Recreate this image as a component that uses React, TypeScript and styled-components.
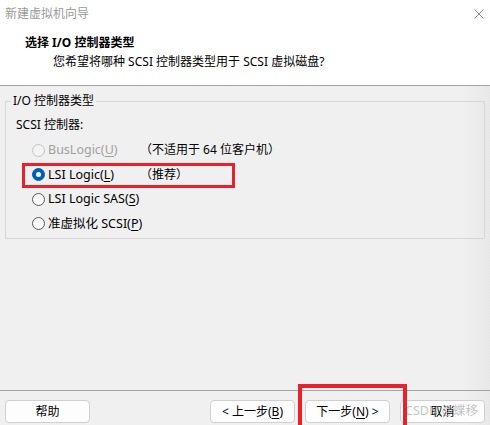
import React from "react";
import styled, { createGlobalStyle } from "styled-components";

const GlobalStyle = createGlobalStyle`
  html, body { margin: 0; padding: 0; }
  body {
    font-family: "Noto Sans", "Noto Sans CJK SC", sans-serif;
    font-size: 12px;
    color: #000;
    background: #f0f0f0;
  }
`;

const Window = styled.div`
  position: relative;
  width: 490px;
  height: 425px;
  display: flex;
  flex-direction: column;
  background: linear-gradient(to right, #f0f0f0 94%, #e8e8e8 100%);
  overflow: hidden;
`;

const Header = styled.header`
  box-sizing: border-box;
  height: 86px;
  background: #fff;
  border-bottom: 1px solid #a3a3a3;
  padding-top: 6px;
  display: flex;
  flex-direction: column;
`;

const TitleBar = styled.div`
  display: flex;
  align-items: center;
  justify-content: space-between;
  height: 16px;
  padding: 0 6px 0 5px;
`;

const Title = styled.span`
  color: #999;
  font-size: 12px;
  line-height: 16px;
`;

const Heading = styled.div`
  margin: 13px 0 0 25px;
  font-weight: bold;
  line-height: 16px;
`;

const SubHeading = styled.div`
  margin: 3px 0 0 53px;
  line-height: 16px;
`;

const Body = styled.main`
  flex: 1;
  padding: 7px 5px 0 5px;
`;

const GroupBox = styled.fieldset`
  margin: 0;
  padding: 0 0 2px 5px;
  border: 1px solid #d6d6d6;
  min-width: 0;
`;

const Legend = styled.legend`
  padding: 0 2px;
  line-height: 16px;
`;

const FieldLabel = styled.div`
  margin-top: 4px;
  padding-left: 5px;
  height: 24px;
  line-height: 24px;
`;

const RadioList = styled.div`
  margin-top: 1px;
  padding-left: 21px;
  display: flex;
  flex-direction: column;
`;

const RadioRow = styled.label`
  display: grid;
  grid-template-columns: 108px auto;
  align-items: center;
  height: 24.5px;
`;

const RadioOption = styled.span<{ $disabled?: boolean }>`
  display: flex;
  align-items: center;
  gap: 3px;
  color: ${(p) => (p.$disabled ? "#a0a0a0" : "#000")};
  line-height: 16px;
`;

const OptionText = styled.span`
  white-space: nowrap;
  font-size: 12.5px;
`;

const RadioCircle = styled.span<{ $checked?: boolean; $disabled?: boolean }>`
  box-sizing: border-box;
  width: 13px;
  height: 13px;
  border-radius: 50%;
  flex: none;
  border: 1px solid
    ${(p) => (p.$checked ? "#005fb8" : p.$disabled ? "#c4c4c4" : "#5a5a5a")};
  background: ${(p) =>
    p.$checked ? "#005fb8" : p.$disabled ? "#f3f3f3" : "#fafafa"};
  display: flex;
  align-items: center;
  justify-content: center;
  &::after {
    content: "";
    display: ${(p) => (p.$checked ? "block" : "none")};
    width: 5px;
    height: 5px;
    border-radius: 50%;
    background: #fff;
  }
`;

const Note = styled.span`
  line-height: 16px;
  white-space: nowrap;
`;

const Key = styled.span`
  text-decoration: underline;
  text-underline-offset: 2px;
`;

const Footer = styled.footer`
  border-top: 1px solid #a3a3a3;
  padding: 9px 5px 2px 5px;
  display: flex;
  gap: 10px;
`;

const Spacer = styled.div`
  flex: 1;
`;

const Button = styled.button`
  box-sizing: border-box;
  width: 85px;
  height: 23px;
  border: 1px solid #d0d0d0;
  border-radius: 4px;
  background: #fdfdfd;
  font-family: "Noto Sans", "Noto Sans CJK SC", sans-serif;
  font-size: 12px;
  line-height: 16px;
  color: #000;
  padding: 0;
  white-space: nowrap;
`;

const Highlight = styled.div<{ $w: number }>`
  position: absolute;
  box-sizing: border-box;
  border: ${(p) => p.$w}px solid #e8222b;
  pointer-events: none;
`;

const Watermark = styled.div`
  position: absolute;
  left: 405px;
  top: 402px;
  font-size: 12.5px;
  line-height: 18px;
  color: rgba(175, 175, 175, 0.75);
  pointer-events: none;
  white-space: nowrap;
`;

const CloseIcon = () => (
  <svg width="10" height="10" viewBox="0 0 10 10">
    <path d="M0.5 0.5 L9.5 9.5 M9.5 0.5 L0.5 9.5" stroke="#8a8a8a" strokeWidth="1" />
  </svg>
);

type Opt = {
  label: React.ReactNode;
  note?: string;
  checked?: boolean;
  disabled?: boolean;
};

const options: Opt[] = [
  { label: <>BusLogic(<Key>U</Key>)</>, note: "（不适用于 64 位客户机）", disabled: true },
  { label: <>LSI Logic(<Key>L</Key>)</>, note: "（推荐）", checked: true },
  { label: <>LSI Logic SAS(<Key>S</Key>)</> },
  { label: <>准虚拟化 SCSI(<Key>P</Key>)</> },
];

export default function App() {
  return (
    <>
      <GlobalStyle />
      <Window>
        <Header>
          <TitleBar>
            <Title>新建虚拟机向导</Title>
            <CloseIcon />
          </TitleBar>
          <Heading>选择 I/O 控制器类型</Heading>
          <SubHeading>您希望将哪种 SCSI 控制器类型用于 SCSI 虚拟磁盘?</SubHeading>
        </Header>
        <Body>
          <GroupBox>
            <Legend>I/O 控制器类型</Legend>
            <FieldLabel>SCSI 控制器:</FieldLabel>
            <RadioList>
              {options.map((o, i) => (
                <RadioRow key={i}>
                  <RadioOption $disabled={o.disabled}>
                    <RadioCircle $checked={o.checked} $disabled={o.disabled} />
                    <OptionText>{o.label}</OptionText>
                  </RadioOption>
                  <Note>{o.note}</Note>
                </RadioRow>
              ))}
            </RadioList>
          </GroupBox>
        </Body>
        <Footer>
          <Button>帮助</Button>
          <Spacer />
          <Button>&lt; 上一步(<Key>B</Key>)</Button>
          <Button>下一步(<Key>N</Key>) &gt;</Button>
          <Button>取消</Button>
        </Footer>
        <Watermark>CSDN @蝶移</Watermark>
        <Highlight $w={3} style={{ left: 22, top: 163, width: 213, height: 25 }} />
        <Highlight $w={4} style={{ left: 298, top: 384, width: 109, height: 60 }} />
      </Window>
    </>
  );
}
